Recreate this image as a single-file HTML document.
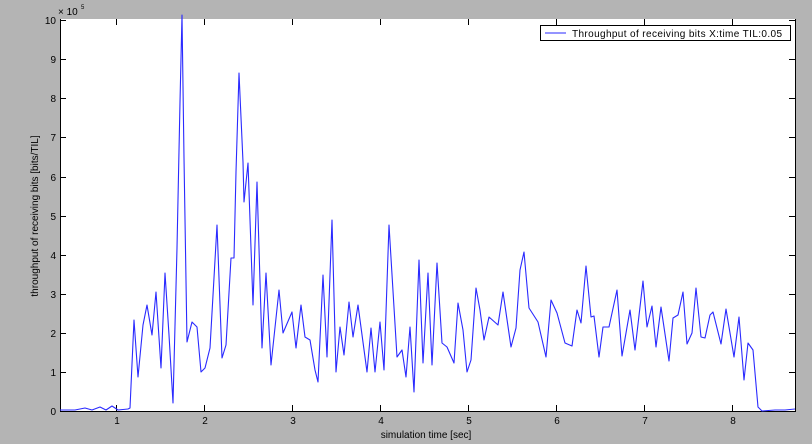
<!DOCTYPE html>
<html><head><style>
html,body{margin:0;padding:0;background:#b4b4b4;}
svg{display:block;}
text{font-family:"Liberation Sans",sans-serif;fill:#000;}
</style></head><body>
<svg width="812" height="444" viewBox="0 0 812 444" xmlns="http://www.w3.org/2000/svg">
<rect width="812" height="444" fill="#b4b4b4"/>
<rect x="60" y="19" width="735" height="392" fill="#fff"/>
<g stroke="#000" stroke-width="1" fill="none">
<path d="M60.5 19V411.5H795.5V19"/>
<path d="M116.5 411v-6M204.5 411v-6M292.5 411v-6M380.5 411v-6M468.5 411v-6M556.5 411v-6M644.5 411v-6M732.5 411v-6"/>
<path d="M116.5 19v6M204.5 19v6M292.5 19v6M380.5 19v6M468.5 19v6M556.5 19v6M644.5 19v6M732.5 19v6"/>
<path d="M60 411.5h6M60 372.5h6M60 333.5h6M60 294.5h6M60 255.5h6M60 216.5h6M60 177.5h6M60 137.5h6M60 98.5h6M60 59.5h6M60 20.5h6"/>
<path d="M795 372.5h-6M795 333.5h-6M795 294.5h-6M795 255.5h-6M795 216.5h-6M795 177.5h-6M795 137.5h-6M795 98.5h-6M795 59.5h-6M795 20.5h-6"/>
</g>
<g font-size="10" text-anchor="end">
<text x="56" y="415">0</text><text x="56" y="376">1</text><text x="56" y="337">2</text><text x="56" y="298">3</text><text x="56" y="259">4</text><text x="56" y="220">5</text><text x="56" y="181">6</text><text x="56" y="141">7</text><text x="56" y="102">8</text><text x="56" y="63">9</text><text x="56" y="24">10</text>
</g>
<g font-size="10" text-anchor="middle">
<text x="117" y="424">1</text><text x="205" y="424">2</text><text x="293" y="424">3</text><text x="381" y="424">4</text><text x="469" y="424">5</text><text x="557" y="424">6</text><text x="645" y="424">7</text><text x="733" y="424">8</text>
<text x="426" y="438">simulation time [sec]</text>
</g>
<text x="58" y="15" font-size="10">× 10</text><text x="81" y="9" font-size="6">5</text>
<text transform="translate(38,216) rotate(-90)" font-size="10" text-anchor="middle">throughput of receiving bits [bits/TIL]</text>
<polyline fill="none" stroke="#2a2aff" stroke-width="1.1" stroke-linejoin="round" points="60,410 75,410 85,408 92,410 100,407 106,410 112,406 118,410 128,409 130,408 134,320 138,377 143,325 147,305 152,335 156,292 161,368 165,273 169,335 173,403 177,248 180,102 182,15 184,158 187,342 192,322 197,327 201,372 205,368 210,348 217,225 222,358 226,345 231,258 234,258 236,172 239,73 243,162 244,202 248,163 253,305 257,182 262,348 266,273 271,365 279,290 283,333 292,312 296,348 301,305 305,337 310,340 315,370 318,382 323,275 327,357 332,220 336,372 340,327 344,355 349,302 353,337 358,305 367,372 371,328 375,372 380,322 384,370 389,225 397,357 402,350 406,377 410,327 414,392 419,260 423,363 428,273 432,365 437,263 442,343 447,347 454,363 458,303 463,330 467,372 471,360 476,288 480,310 484,340 489,317 498,325 503,292 511,347 516,328 520,270 524,252 529,308 538,322 546,357 551,300 557,313 565,343 572,346 577,310 581,323 586,266 591,317 594,316 599,357 603,327 609,327 617,290 622,356 630,310 635,350 643,281 647,327 652,306 656,347 661,307 669,361 673,318 678,315 683,292 687,344 692,333 696,288 701,337 705,338 710,315 713,312 721,344 726,309 734,357 739,317 744,380 748,343 753,350 758,407 762,411 775,410 785,410 795,409"/>
<rect x="540.5" y="25.5" width="250" height="15" fill="#fff" stroke="#000"/>
<line x1="545" y1="33" x2="566" y2="33" stroke="#2a2aff" stroke-width="1.1"/>
<text x="572" y="37" font-size="10" textLength="210" lengthAdjust="spacing">Throughput of receiving bits X:time TIL:0.05</text>
</svg>
</body></html>
